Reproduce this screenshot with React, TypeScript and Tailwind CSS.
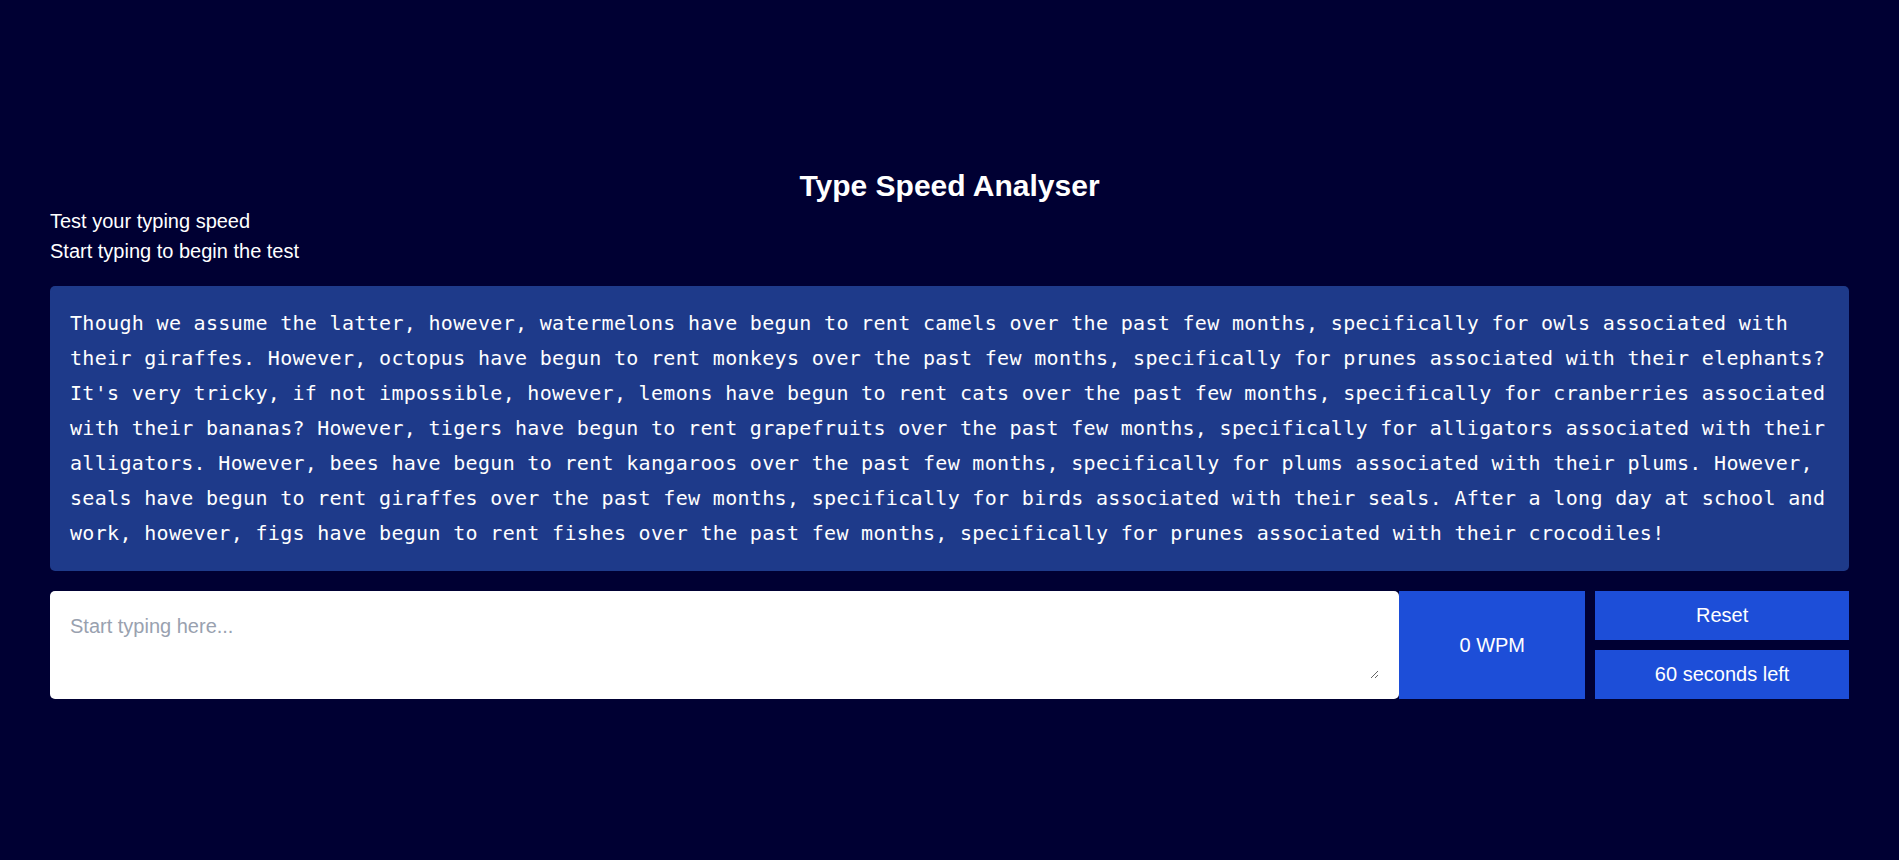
export default function App() {
  const text =
    "Though we assume the latter, however, watermelons have begun to rent camels over the past few months, specifically for owls associated with their giraffes. However, octopus have begun to rent monkeys over the past few months, specifically for prunes associated with their elephants? It's very tricky, if not impossible, however, lemons have begun to rent cats over the past few months, specifically for cranberries associated with their bananas? However, tigers have begun to rent grapefruits over the past few months, specifically for alligators associated with their alligators. However, bees have begun to rent kangaroos over the past few months, specifically for plums associated with their plums. However, seals have begun to rent giraffes over the past few months, specifically for birds associated with their seals. After a long day at school and work, however, figs have begun to rent fishes over the past few months, specifically for prunes associated with their crocodiles!";
  return (
    <div className="min-h-screen bg-[#000033] flex flex-col justify-center px-[50px] pt-[4px] font-['Liberation_Sans',Arial,sans-serif] text-white">
      <h1 className="text-center text-[30px] leading-[40px] font-bold">Type Speed Analyser</h1>
      <p className="text-[20px] leading-[30px]">Test your typing speed</p>
      <p className="text-[20px] leading-[30px]">Start typing to begin the test</p>
      <div className="mt-[20px] rounded-[5px] bg-[#1e3a8a] p-[20px] font-['DejaVu_Sans_Mono',monospace] text-[20px] leading-[35px] tracking-[0.32px]">
        {text}
      </div>
      <div className="mt-[20px] flex h-[108px]">
        <div className="w-3/4 rounded-[5px] bg-white p-[20px]">
          <textarea
            className="block w-full h-[68px] resize-y outline-none text-[20px] leading-[30px] text-black placeholder:text-gray-400"
            placeholder="Start typing here..."
          />
        </div>
        <div className="w-[186px] bg-[#1d4ed8] flex items-center justify-center text-[20px] leading-[30px]">
          0 WPM
        </div>
        <div className="ml-[10px] flex-1 flex flex-col gap-[10px]">
          <button className="flex-1 bg-[#1d4ed8] text-[20px] leading-[30px] text-white">Reset</button>
          <div className="flex-1 bg-[#1d4ed8] flex items-center justify-center text-[20px] leading-[30px]">
            60 seconds left
          </div>
        </div>
      </div>
    </div>
  );
}
